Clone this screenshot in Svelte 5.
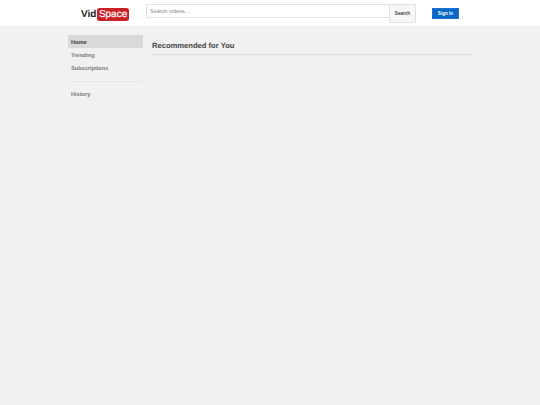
<script>
  const mainLinks = ["Home", "Trending", "Subscriptions"];
  let active = "Home";
</script>

<header class="masthead">
  <div class="logo">
    <span class="vid">Vid</span><span class="space">Space</span>
  </div>
  <form class="search" on:submit|preventDefault>
    <input type="text" placeholder="Search videos..." />
    <button type="button" class="search-btn">Search</button>
  </form>
  <button type="button" class="sign-in">Sign In</button>
</header>

<div class="page">
  <nav class="sidebar">
    {#each mainLinks as link}
      <div class="nav-item" class:active={link === active}>{link}</div>
    {/each}
    <hr />
    <div class="nav-item">History</div>
  </nav>
  <main class="content">
    <h2>Recommended for You</h2>
  </main>
</div>

<style>
  :global(body) {
    background: #f1f1f1;
    font-family: "Liberation Sans", Arial, sans-serif;
    text-rendering: geometricPrecision;
  }

  .masthead {
    display: flex;
    align-items: flex-start;
    height: 26px;
    padding-left: 81px;
    background: #fff;
    border-bottom: 1px solid #ececec;
  }

  .logo {
    display: flex;
    align-items: center;
    width: 65px;
    height: 14px;
    margin-top: 7px;
    font-size: 10px;
    font-weight: bold;
  }

  .vid {
    color: #222;
  }

  .space {
    margin-left: 0.5px;
    padding: 1px 2px;
    border-radius: 2.5px;
    background: #cc2029;
    color: #fff;
    font-weight: normal;
    -webkit-text-stroke: 0.2px #fff;
  }

  .search {
    display: flex;
    align-items: flex-start;
    margin-top: 4px;
  }

  input {
    box-sizing: border-box;
    width: 243px;
    height: 14px;
    padding: 0 3px;
    border: 1px solid #e2e2e2;
    border-right: none;
    font-family: inherit;
    font-size: 5.5px;
    outline: none;
  }

  input::placeholder {
    color: #888;
    opacity: 1;
  }

  .search-btn {
    box-sizing: border-box;
    width: 27px;
    height: 19px;
    padding: 0;
    border: 1px solid #e2e2e2;
    border-radius: 0 0 1px 1px;
    background: #f6f6f6;
    color: #444;
    font-family: inherit;
    font-size: 4.6px;
    font-weight: bold;
  }

  .sign-in {
    box-sizing: border-box;
    width: 27px;
    height: 11px;
    margin: 8px 0 0 16px;
    padding: 0;
    border: 1px solid #1a74d0;
    background: #0766c6;
    color: #fff;
    font-family: inherit;
    font-size: 4.6px;
    font-weight: bold;
  }

  .page {
    display: flex;
    gap: 9px;
    padding: 8px 0 0 68px;
  }

  .sidebar {
    width: 75px;
  }

  .nav-item {
    box-sizing: border-box;
    height: 13px;
    padding: 2px 0 0 3px;
    color: #777;
    font-size: 5.6px;
    font-weight: bold;
    line-height: 13px;
  }

  .nav-item.active {
    background: #d9d9d9;
    color: #333;
  }

  hr {
    height: 1px;
    margin: 7px 0 5px;
    border: none;
    background: #e6e6e6;
  }

  .content {
    width: 320px;
    padding-top: 6px;
  }

  h2 {
    margin: 0;
    padding-bottom: 3px;
    border-bottom: 1px solid #dcdcdc;
    color: #444;
    font-size: 7.6px;
    font-weight: bold;
    line-height: 10px;
  }
</style>
